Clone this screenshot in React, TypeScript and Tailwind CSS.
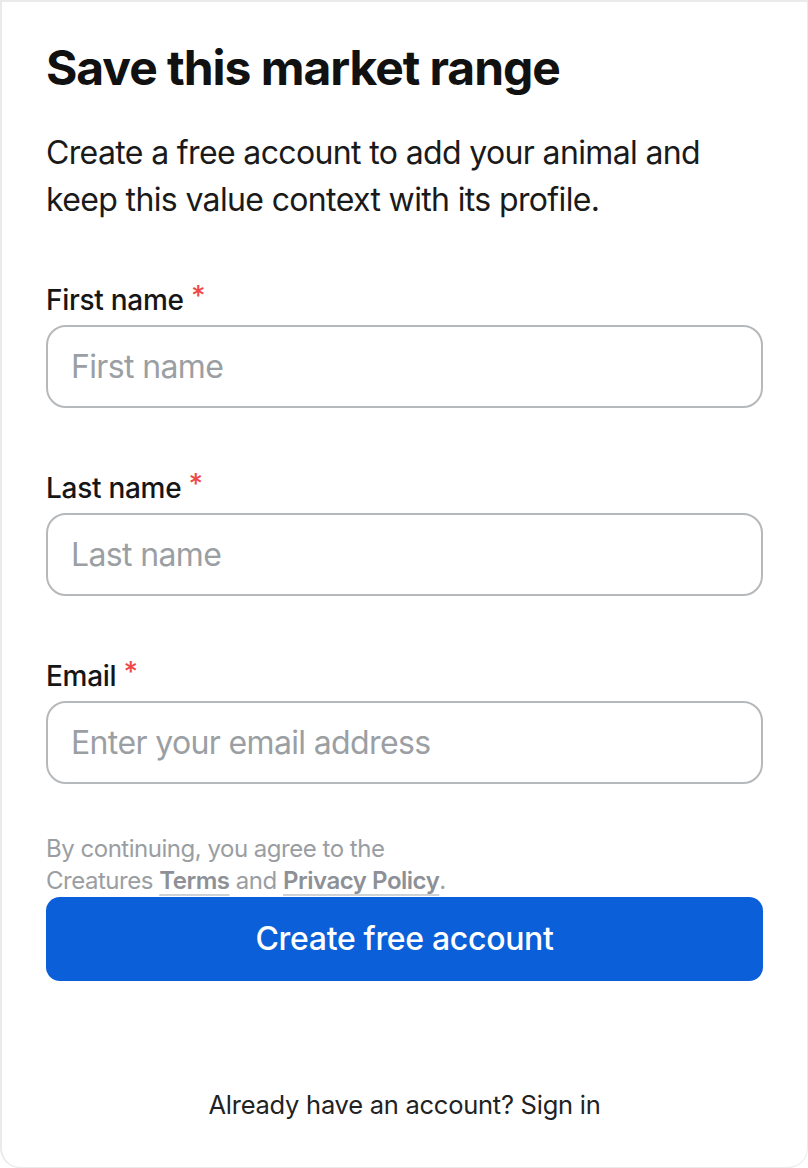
export default function App() {
    const fields = [
        { label: "First name", placeholder: "First name", type: "text" },
        { label: "Last name", placeholder: "Last name", type: "text" },
        { label: "Email", placeholder: "Enter your email address", type: "email" },
    ];

    return (
        <div className="w-[808px] h-[1168px] bg-white overflow-hidden" style={{ fontFamily: "Inter, 'Noto Sans', sans-serif" }}>
            <div className="h-full border-t-2 border-l-2 border-r border-b border-[#e9eaeb] rounded-b-[20px] bg-white pl-[44px] pr-[44px] flex flex-col">
                <h1 className="mt-[36px] text-[48px] leading-[60px] font-bold tracking-[-0.022em] text-[#111111]">
                    Save this market range
                </h1>

                <p className="mt-[31px] text-[32px] leading-[47px] tracking-[-0.02em] text-[#1a1a1a]">
                    Create a free account to add your animal and keep this value context with its profile.
                </p>

                <form className="mt-[57px] flex flex-col" onSubmit={(e) => e.preventDefault()}>
                    {fields.map((f, i) => (
                        <div key={f.label} className={i === 0 ? "" : "mt-[60px]"}>
                            <label className="block text-[28px] leading-[40px] font-medium tracking-[-0.01em] text-[#161616]">
                                {f.label}{" "}
                                <span className="relative top-[-4px] text-[#f04848]">*</span>
                            </label>
                            <input
                                type={f.type}
                                placeholder={f.placeholder}
                                className="mt-[5px] w-full h-[83px] rounded-[20px] border-2 border-[#b6b9bc] bg-white px-[23px] text-[32px] tracking-[-0.02em] text-[#111] placeholder:text-[#9b9fa4] outline-none"
                            />
                        </div>
                    ))}

                    <p className="mt-[49px] text-[24px] leading-[32px] tracking-[-0.02em] text-[#9a9ea3]">
                        By continuing, you agree to the
                        <br />
                        Creatures{" "}
                        <a className="font-semibold text-[#8d9197] underline decoration-[#cfd2d5] decoration-2 underline-offset-[5px]">Terms</a>{" "}
                        and{" "}
                        <a className="font-semibold text-[#8d9197] underline decoration-[#cfd2d5] decoration-2 underline-offset-[5px]">Privacy Policy</a>.
                    </p>

                    <button
                        type="submit"
                        className="mt-0 w-full h-[84px] rounded-[14px] bg-[#0b5fd8] text-white text-[32px] font-medium tracking-[-0.01em]"
                    >
                        Create free account
                    </button>
                </form>

                <p className="mt-[106px] text-center text-[25.5px] leading-[36px] tracking-[-0.01em] text-[#222222]">
                    Already have an account? Sign in
                </p>
            </div>
        </div>
    );
}
